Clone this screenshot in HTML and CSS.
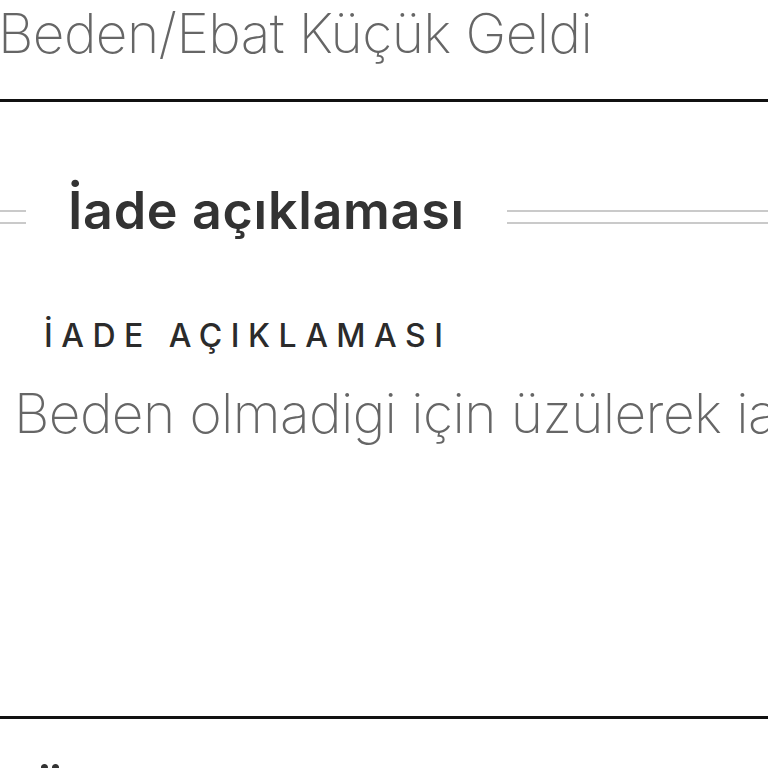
FILE: index.html
```html
<!DOCTYPE html>
<html lang="tr">
<head>
    <meta charset="UTF-8">
    <meta name="viewport" content="width=device-width, initial-scale=1.0">
    <title>İade Detayı</title>
    <link rel="stylesheet" href="styles.css">
</head>
<body>

<div class="page">
    <!-- Seçilen iade nedeni -->
    <div class="reason-block">
        <div class="reason-value">Beden/Ebat Küçük Geldi</div>
    </div>

    <!-- İade açıklaması -->
    <div class="section">
        <div class="section-title">
            <span class="title-line short"></span>
            <h2>İade açıklaması</h2>
            <span class="title-line"></span>
        </div>
        <div class="field">
            <label class="field-label">İade açıklaması</label>
            <div class="field-value">Beden olmadigi için üzülerek iade ediyorum</div>
        </div>
    </div>

    <!-- Sonraki bölüm -->
    <div class="section next">
        <div class="section-title">
            <h2>Ödeme bilgileri</h2>
        </div>
    </div>
</div>

</body>
</html>
```

FILE: styles.css
```css
html, body {
    margin: 0;
    padding: 0;
    background: #fff;
    overflow: hidden;
}
body {
    font-family: Inter, "Noto Sans", sans-serif;
}
.page {
    width: 768px;
    height: 768px;
    overflow: hidden;
}
.reason-block {
    padding-bottom: 33px;
    border-bottom: 3px solid #111;
}
.reason-value {
    margin-left: -2px;
    font-size: 55px;
    line-height: 66px;
    font-weight: 200;
    letter-spacing: -0.6px;
    color: #666;
    white-space: nowrap;
}
.section {
    padding-top: 78px;
    padding-bottom: 270px;
    border-bottom: 3px solid #111;
}
.section.next {
    padding: 45px 0 0 30px;
    border-bottom: 0;
}
.section-title {
    display: flex;
    align-items: flex-start;
    gap: 42px;
}
.section-title h2 {
    margin: 0;
    font-size: 52px;
    line-height: 62px;
    font-weight: 600;
    letter-spacing: 0.7px;
    color: #333;
    white-space: nowrap;
}
.title-line {
    flex: 1;
    height: 10px;
    margin-top: 30px;
    border-top: 2px solid #cacaca;
    border-bottom: 2px solid #cacaca;
}
.title-line.short {
    flex: 0 0 26px;
}
.field {
    margin-top: 74px;
}
.field-label {
    display: block;
    margin-left: 44px;
    font-size: 32px;
    line-height: 40px;
    font-weight: 500;
    letter-spacing: 8.5px;
    text-transform: uppercase;
    color: #2b2b2b;
}
.field-value {
    margin-top: 24px;
    margin-left: 14px;
    font-size: 55px;
    line-height: 66px;
    font-weight: 200;
    letter-spacing: -0.6px;
    color: #666;
    white-space: nowrap;
}
```
